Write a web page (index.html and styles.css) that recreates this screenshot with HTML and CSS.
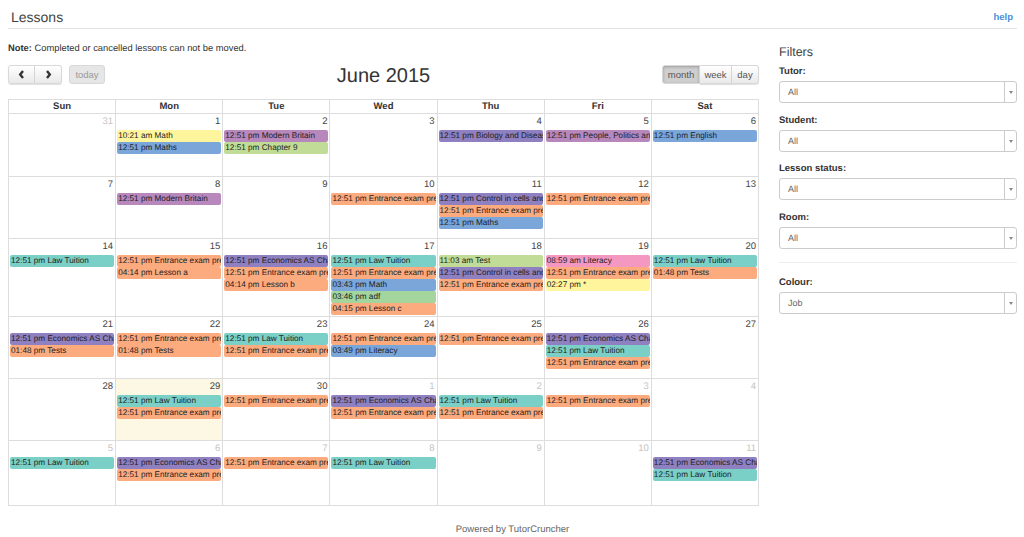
FILE: index.html
```html
<!DOCTYPE html>
<html lang="en">
<head>
    <meta charset="UTF-8">
    <title>Lessons</title>
    <link rel="stylesheet" href="styles.css">
</head>
<body>
    <div class="page-head">
        <h1>Lessons</h1>
        <a class="help" href="#">help</a>
    </div>
    <div class="layout">
        <div class="main">
            <p class="note"><b>Note:</b> Completed or cancelled lessons can not be moved.</p>
            <div class="toolbar">
                <div class="tb-left">
                    <div class="btn-group">
                        <button class="btn btn-arrow"><svg width="7" height="9" viewBox="0 0 7 9"><path d="M5 1 2.2 4.5 5 8" fill="none" stroke="#333" stroke-width="2.4"/></svg></button>
                        <button class="btn btn-arrow"><svg width="7" height="9" viewBox="0 0 7 9"><path d="M2 1 4.8 4.5 2 8" fill="none" stroke="#333" stroke-width="2.4"/></svg></button>
                    </div>
                    <button class="btn btn-today">today</button>
                </div>
                <h2 class="cal-title">June 2015</h2>
                <div class="btn-group">
                    <button class="btn btn-month btn-active">month</button>
                    <button class="btn btn-week">week</button>
                    <button class="btn btn-day">day</button>
                </div>
            </div>
            <div class="cal">
                <div class="cal-head">
                    <div>Sun</div><div>Mon</div><div>Tue</div><div>Wed</div><div>Thu</div><div>Fri</div><div>Sat</div>
                </div>

                <div class="week wk-a">
                    <div class="day other"><div class="num">31</div></div>
                    <div class="day"><div class="num">1</div>
                        <div class="ev yellow">10:21 am Math</div>
                        <div class="ev blue">12:51 pm Maths</div>
                    </div>
                    <div class="day"><div class="num">2</div>
                        <div class="ev purple">12:51 pm Modern Britain</div>
                        <div class="ev green">12:51 pm Chapter 9</div>
                    </div>
                    <div class="day"><div class="num">3</div></div>
                    <div class="day"><div class="num">4</div>
                        <div class="ev violet">12:51 pm Biology and Diseases</div>
                    </div>
                    <div class="day"><div class="num">5</div>
                        <div class="ev purple">12:51 pm People, Politics and Power</div>
                    </div>
                    <div class="day"><div class="num">6</div>
                        <div class="ev blue">12:51 pm English</div>
                    </div>
                </div>

                <div class="week wk-b">
                    <div class="day"><div class="num">7</div></div>
                    <div class="day"><div class="num">8</div>
                        <div class="ev purple">12:51 pm Modern Britain</div>
                    </div>
                    <div class="day"><div class="num">9</div></div>
                    <div class="day"><div class="num">10</div>
                        <div class="ev orange">12:51 pm Entrance exam preparation</div>
                    </div>
                    <div class="day"><div class="num">11</div>
                        <div class="ev violet">12:51 pm Control in cells and organisms</div>
                        <div class="ev orange">12:51 pm Entrance exam preparation</div>
                        <div class="ev blue">12:51 pm Maths</div>
                    </div>
                    <div class="day"><div class="num">12</div>
                        <div class="ev orange">12:51 pm Entrance exam preparation</div>
                    </div>
                    <div class="day"><div class="num">13</div></div>
                </div>

                <div class="week wk-c">
                    <div class="day"><div class="num">14</div>
                        <div class="ev teal">12:51 pm Law Tuition</div>
                    </div>
                    <div class="day"><div class="num">15</div>
                        <div class="ev orange">12:51 pm Entrance exam preparation</div>
                        <div class="ev orange">04:14 pm Lesson a</div>
                    </div>
                    <div class="day"><div class="num">16</div>
                        <div class="ev violet">12:51 pm Economics AS Chapter 1</div>
                        <div class="ev orange">12:51 pm Entrance exam preparation</div>
                        <div class="ev orange">04:14 pm Lesson b</div>
                    </div>
                    <div class="day"><div class="num">17</div>
                        <div class="ev teal">12:51 pm Law Tuition</div>
                        <div class="ev orange">12:51 pm Entrance exam preparation</div>
                        <div class="ev blue">03:43 pm Math</div>
                        <div class="ev moss">03:46 pm adf</div>
                        <div class="ev orange">04:15 pm Lesson c</div>
                    </div>
                    <div class="day"><div class="num">18</div>
                        <div class="ev green">11:03 am Test</div>
                        <div class="ev violet">12:51 pm Control in cells and organisms</div>
                        <div class="ev orange">12:51 pm Entrance exam preparation</div>
                    </div>
                    <div class="day"><div class="num">19</div>
                        <div class="ev pink">08:59 am Literacy</div>
                        <div class="ev orange">12:51 pm Entrance exam preparation</div>
                        <div class="ev yellow">02:27 pm *</div>
                    </div>
                    <div class="day"><div class="num">20</div>
                        <div class="ev teal">12:51 pm Law Tuition</div>
                        <div class="ev orange">01:48 pm Tests</div>
                    </div>
                </div>

                <div class="week wk-b">
                    <div class="day"><div class="num">21</div>
                        <div class="ev violet">12:51 pm Economics AS Chapter 1</div>
                        <div class="ev orange">01:48 pm Tests</div>
                    </div>
                    <div class="day"><div class="num">22</div>
                        <div class="ev orange">12:51 pm Entrance exam preparation</div>
                        <div class="ev orange">01:48 pm Tests</div>
                    </div>
                    <div class="day"><div class="num">23</div>
                        <div class="ev teal">12:51 pm Law Tuition</div>
                        <div class="ev orange">12:51 pm Entrance exam preparation</div>
                    </div>
                    <div class="day"><div class="num">24</div>
                        <div class="ev orange">12:51 pm Entrance exam preparation</div>
                        <div class="ev blue">03:49 pm Literacy</div>
                    </div>
                    <div class="day"><div class="num">25</div>
                        <div class="ev orange">12:51 pm Entrance exam preparation</div>
                    </div>
                    <div class="day"><div class="num">26</div>
                        <div class="ev violet">12:51 pm Economics AS Chapter 1</div>
                        <div class="ev teal">12:51 pm Law Tuition</div>
                        <div class="ev orange">12:51 pm Entrance exam preparation</div>
                    </div>
                    <div class="day"><div class="num">27</div></div>
                </div>

                <div class="week wk-b">
                    <div class="day"><div class="num">28</div></div>
                    <div class="day today"><div class="num">29</div>
                        <div class="ev teal">12:51 pm Law Tuition</div>
                        <div class="ev orange">12:51 pm Entrance exam preparation</div>
                    </div>
                    <div class="day"><div class="num">30</div>
                        <div class="ev orange">12:51 pm Entrance exam preparation</div>
                    </div>
                    <div class="day other"><div class="num">1</div>
                        <div class="ev violet">12:51 pm Economics AS Chapter 1</div>
                        <div class="ev orange">12:51 pm Entrance exam preparation</div>
                    </div>
                    <div class="day other"><div class="num">2</div>
                        <div class="ev teal">12:51 pm Law Tuition</div>
                        <div class="ev orange">12:51 pm Entrance exam preparation</div>
                    </div>
                    <div class="day other"><div class="num">3</div>
                        <div class="ev orange">12:51 pm Entrance exam preparation</div>
                    </div>
                    <div class="day other"><div class="num">4</div></div>
                </div>

                <div class="week wk-d">
                    <div class="day other"><div class="num">5</div>
                        <div class="ev teal">12:51 pm Law Tuition</div>
                    </div>
                    <div class="day other"><div class="num">6</div>
                        <div class="ev violet">12:51 pm Economics AS Chapter 1</div>
                        <div class="ev orange">12:51 pm Entrance exam preparation</div>
                    </div>
                    <div class="day other"><div class="num">7</div>
                        <div class="ev orange">12:51 pm Entrance exam preparation</div>
                    </div>
                    <div class="day other"><div class="num">8</div>
                        <div class="ev teal">12:51 pm Law Tuition</div>
                    </div>
                    <div class="day other"><div class="num">9</div></div>
                    <div class="day other"><div class="num">10</div></div>
                    <div class="day other"><div class="num">11</div>
                        <div class="ev violet">12:51 pm Economics AS Chapter 1</div>
                        <div class="ev teal">12:51 pm Law Tuition</div>
                    </div>
                </div>
            </div>
        </div>

        <aside class="filters">
            <h3>Filters</h3>
            <label>Tutor:</label>
            <div class="select"><span>All</span><i></i></div>
            <label>Student:</label>
            <div class="select"><span>All</span><i></i></div>
            <label>Lesson status:</label>
            <div class="select"><span>All</span><i></i></div>
            <label>Room:</label>
            <div class="select"><span>All</span><i></i></div>
            <hr>
            <label>Colour:</label>
            <div class="select"><span>Job</span><i></i></div>
        </aside>
    </div>
    <p class="powered">Powered by TutorCruncher</p>
</body>
</html>
```
FILE: styles.css
```css
* { box-sizing: border-box; }
body {
    margin: 0;
    padding: 0 7px 0 8px;
    font-family: 'Liberation Sans', Arial, sans-serif;
    font-size: 9px;
    color: #333;
    background: #fff;
    text-rendering: geometricPrecision;
}
.page-head {
    display: flex;
    justify-content: space-between;
    align-items: flex-end;
    height: 29px;
    padding: 0 4px 2px 3px;
    border-bottom: 1px solid #e3e3e3;
}
h1 { margin: 0; font-size: 14px; line-height: 18px; font-weight: 400; color: #444; }
.help { font-size: 9.5px; line-height: 17px; font-weight: 700; color: #4a90d9; text-decoration: none; }
.layout { display: flex; gap: 20px; }
.main { width: 751px; flex: none; }
.note { margin: 0; padding-top: 14px; height: 36px; font-size: 9.35px; line-height: 11px; }
.toolbar {
    display: flex;
    justify-content: space-between;
    align-items: center;
    height: 19px;
    margin-bottom: 15px;
}
.tb-left { display: flex; gap: 7px; }
.cal-title { margin: 3px 0 0; font-size: 20px; font-weight: 400; color: #333; }
.btn-group { display: flex; }
.btn {
    height: 19px;
    padding: 0;
    font-family: inherit;
    font-size: 9.5px;
    color: #555;
    background: linear-gradient(#fff, #e9e9e9);
    border: 1px solid #d8d8d8;
    border-left-width: 0;
    box-shadow: 0 1px 1px rgba(0, 0, 0, 0.12);
}
.btn-group .btn:first-child { border-left-width: 1px; border-radius: 3px 0 0 3px; }
.btn-group .btn:last-child { border-radius: 0 3px 3px 0; }
.btn-arrow { display: flex; align-items: center; justify-content: center; width: 27px; }
.btn-today { width: 36px; color: #999; background: #e6e6e6; border-left-width: 1px; border-radius: 3px; box-shadow: none; }
.btn-month { width: 38px; }
.btn-week { width: 32px; }
.btn-day { width: 27px; }
.btn-active { background: #cfcfcf; color: #555; box-shadow: inset 0 1px 3px rgba(0, 0, 0, 0.25); }

.cal { border-top: 1px solid #ddd; border-left: 1px solid #ddd; }
.cal-head, .week { display: grid; grid-template-columns: repeat(7, 1fr); }
.cal-head div {
    height: 14px;
    line-height: 13px;
    text-align: center;
    font-size: 9.5px;
    font-weight: 700;
    border-right: 1px solid #ddd;
    border-bottom: 1px solid #ddd;
}
.wk-a { height: 63px; }
.wk-b { height: 62px; }
.wk-c { height: 78px; }
.wk-d { height: 65px; }
.day { min-width: 0; padding: 0 1px; border-right: 1px solid #ddd; border-bottom: 1px solid #ddd; }
.today { background: #fcf8e3; }
.num { height: 16px; padding: 1px 1px 0 0; line-height: 14px; text-align: right; font-size: 9.5px; color: #444; }
.other .num { color: #c4c4c4; }
.ev {
    height: 11.5px;
    margin-bottom: 0.5px;
    padding: 0 1px;
    line-height: 12px;
    font-size: 8.2px;
    color: #1c1c1c;
    white-space: nowrap;
    overflow: hidden;
    border-radius: 2px;
}
.yellow { background: #fff59d; }
.blue { background: #7ba6da; }
.purple { background: #b888bd; }
.green { background: #c0dc96; }
.violet { background: #8f81c1; }
.orange { background: #fcab7f; }
.teal { background: #7acfc7; }
.pink { background: #f598c1; }
.moss { background: #a4d59c; }
.powered { margin: 18px 0 0; text-align: center; font-size: 9.5px; color: #666; }

.filters { width: 238px; flex: none; padding-top: 16px; }
.filters h3 { margin: 0; height: 20px; font-size: 12.5px; line-height: 15px; font-weight: 400; color: #444; }
.filters label { display: block; height: 16px; font-size: 9.5px; line-height: 14px; font-weight: 700; }
.select {
    display: flex;
    justify-content: space-between;
    align-items: stretch;
    height: 22px;
    margin-bottom: 10.6px;
    line-height: 20px;
    font-size: 9px;
    color: #666;
    border: 1px solid #ccc;
    border-radius: 3px;
}
.select span { padding-left: 8px; }
.select i { position: relative; width: 12px; border-left: 1px solid #ccc; }
.select i::after {
    content: "";
    position: absolute;
    top: 9px;
    left: 4px;
    border: 2px solid transparent;
    border-top: 3px solid #888;
    border-bottom: 0;
}
.filters hr { height: 1px; margin: 13px 0; border: 0; background: #eee; }
```
